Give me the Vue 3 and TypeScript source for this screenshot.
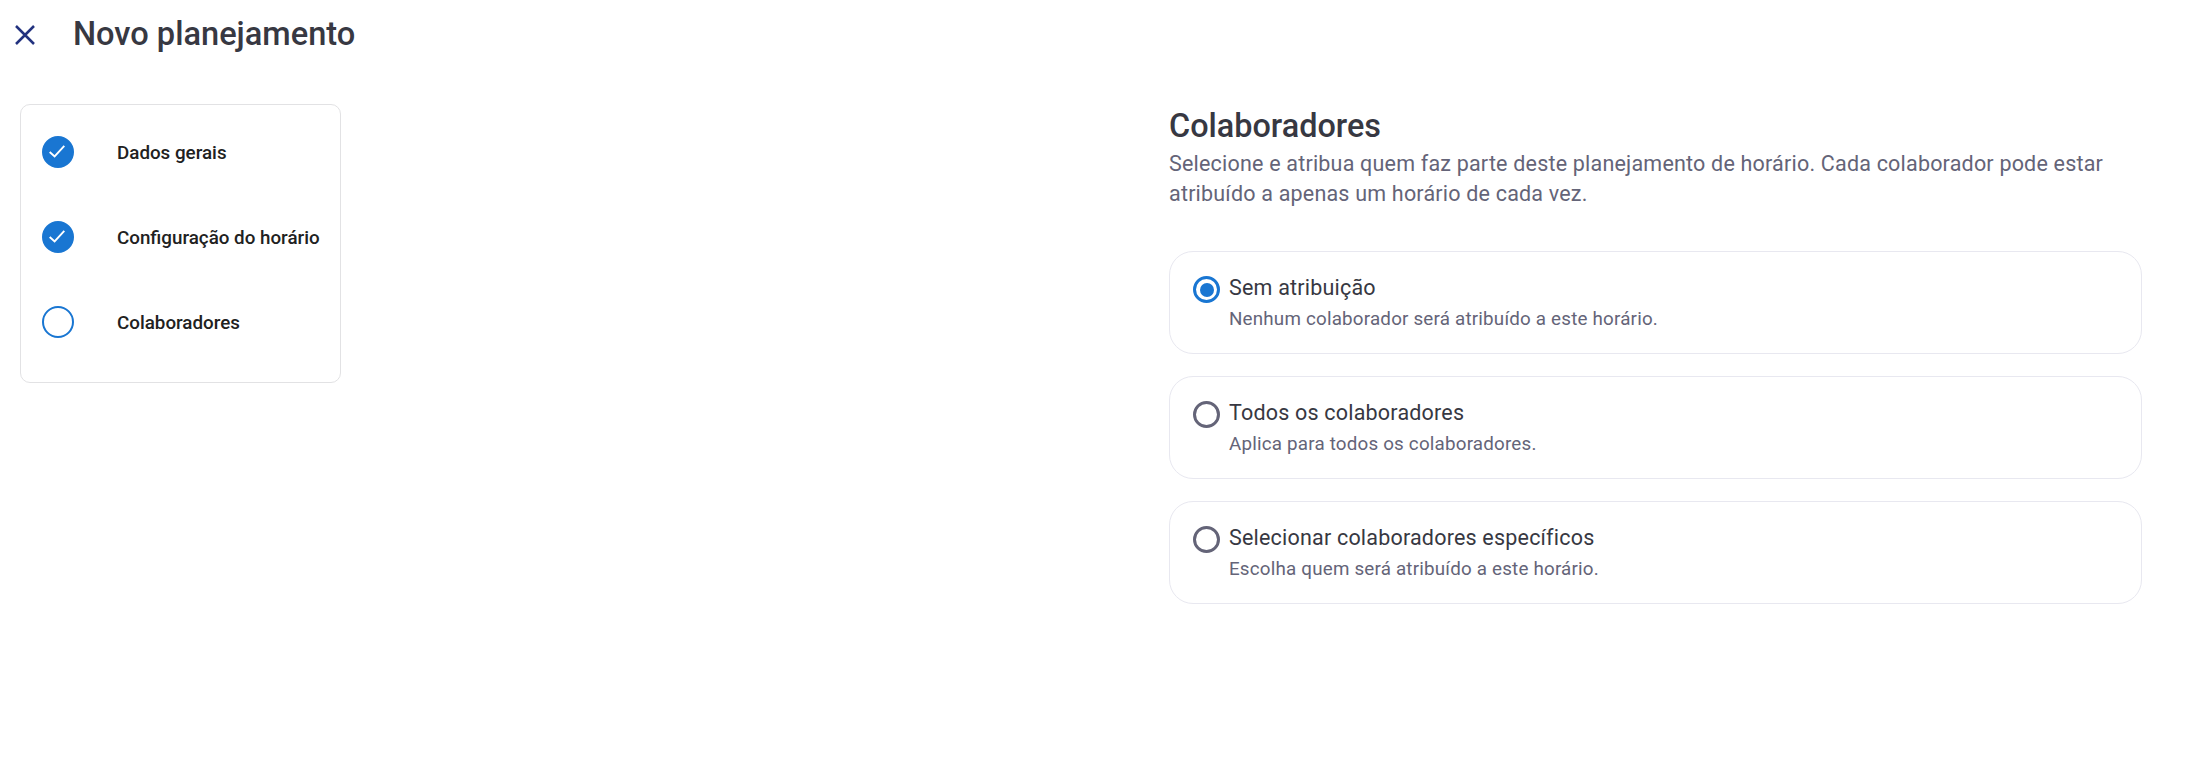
<script setup lang="ts">
type Step = { label: string, done: boolean }
type Option = { title: string, hint: string, selected: boolean }

const steps: Step[] = [
  { label: 'Dados gerais', done: true },
  { label: 'Configuração do horário', done: true },
  { label: 'Colaboradores', done: false },
]

const options: Option[] = [
  { title: 'Sem atribuição', hint: 'Nenhum colaborador será atribuído a este horário.', selected: true },
  { title: 'Todos os colaboradores', hint: 'Aplica para todos os colaboradores.', selected: false },
  { title: 'Selecionar colaboradores específicos', hint: 'Escolha quem será atribuído a este horário.', selected: false },
]
</script>

<template>
  <div class="page">
    <header class="top-bar">
      <svg class="close-icon" width="20" height="20" viewBox="0 0 20 20" fill="none">
        <path d="M1 1L19 19M19 1L1 19" stroke="#22327f" stroke-width="2.5" />
      </svg>
      <h1>Novo planejamento</h1>
    </header>

    <div class="content">
      <nav class="stepper">
        <div v-for="step of steps" :key="step.label" class="step">
          <span class="step-dot" :class="{ done: step.done }">
            <svg v-if="step.done" class="check" width="16" height="13" viewBox="0 0 16 13" fill="none">
              <path d="M0.7 7L5.6 11.4L15.3 0.8" stroke="#fff" stroke-width="1.9" />
            </svg>
          </span>
          <span class="step-label">{{ step.label }}</span>
        </div>
      </nav>

      <main class="panel">
        <h2>Colaboradores</h2>
        <p class="lead">
          Selecione e atribua quem faz parte deste planejamento de horário. Cada colaborador pode estar atribuído a apenas um horário de cada vez.
        </p>
        <div class="options">
          <label v-for="option of options" :key="option.title" class="option">
            <span class="radio" :class="{ selected: option.selected }" />
            <span class="option-text">
              <span class="option-title">{{ option.title }}</span>
              <span class="option-hint">{{ option.hint }}</span>
            </span>
          </label>
        </div>
      </main>
    </div>
  </div>
</template>

<style scoped>
.page {
  height: 762px;
  overflow: hidden;
  background: #fff;
  font-family: Roboto, "Liberation Sans", sans-serif;
}

.top-bar {
  display: flex;
  align-items: center;
  height: 70px;
  padding-left: 15px;
}

.close-icon {
  flex: 0 0 auto;
}

.top-bar h1 {
  margin: -2px 0 0 38px;
  color: #373842;
  font-size: 32.6px;
  font-weight: 480;
  line-height: 40px;
}

.content {
  display: flex;
  align-items: flex-start;
  padding: 34px 70px 0 20px;
}

.stepper {
  display: flex;
  flex-direction: column;
  width: 321px;
  height: 279px;
  box-sizing: border-box;
  padding: 4px 0 0 21px;
  border: 1px solid #e2e2e4;
  border-radius: 10px;
}

.step {
  display: flex;
  align-items: center;
  height: 85.3px;
}

.step-dot {
  display: flex;
  align-items: center;
  justify-content: center;
  width: 32px;
  height: 32px;
  box-sizing: border-box;
  border: 2px solid #1976d2;
  border-radius: 50%;
}

.step-dot.done {
  background: #1976d2;
}

.check {
  margin: 0 3px 0 0;
}

.step-label {
  margin: 2px 0 0 43px;
  color: #212121;
  font-size: 18.8px;
  font-weight: 480;
}

.panel {
  width: 973px;
  margin-left: 828px;
}

.panel h2 {
  margin: 1px 0 0;
  color: #373842;
  font-size: 32.4px;
  font-weight: 480;
  line-height: 42px;
}

.lead {
  margin: 2px 0 0;
  color: #646478;
  font-size: 21.5px;
  line-height: 30px;
  letter-spacing: 0.2px;
}

.options {
  display: flex;
  flex-direction: column;
  gap: 21.8px;
  margin-top: 42px;
}

.option {
  display: flex;
  height: 103px;
  box-sizing: border-box;
  padding: 21px 23px;
  border: 1px solid #e8e8f0;
  border-radius: 24px;
}

.radio {
  flex: 0 0 auto;
  position: relative;
  width: 27px;
  height: 27px;
  margin-top: 3px;
  box-sizing: border-box;
  border: 3px solid #646478;
  border-radius: 50%;
}

.radio.selected {
  border-color: #1976d2;
}

.radio.selected::after {
  content: "";
  position: absolute;
  inset: 3.5px;
  border-radius: 50%;
  background: #1976d2;
}

.option-text {
  display: flex;
  flex-direction: column;
  margin-left: 9px;
}

.option-title {
  color: #373842;
  font-size: 21.5px;
  line-height: 30px;
  letter-spacing: 0.2px;
}

.option-hint {
  margin-top: 2px;
  color: #646478;
  font-size: 18.8px;
  line-height: 28px;
  letter-spacing: 0.2px;
}
</style>
